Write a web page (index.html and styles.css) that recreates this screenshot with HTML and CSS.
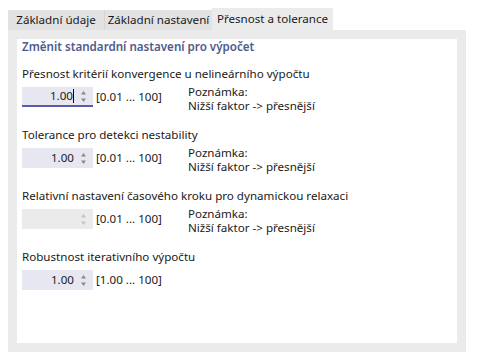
FILE: index.html
```html
<!DOCTYPE html>
<html lang="cs">
<head>
  <meta charset="UTF-8">
  <title>Přesnost a tolerance</title>
  <link rel="stylesheet" href="styles.css">
</head>
<body>

  <div class="tabs">
    <div class="tab tab-1">Základní údaje</div>
    <div class="tab tab-2">Základní nastavení</div>
    <div class="tab tab-3 active">Přesnost a tolerance</div>
  </div>

  <div class="panel">
    <div class="panel-inner">
      <div class="section-title">Změnit standardní nastavení pro výpočet</div>

      <div class="setting">
        <div class="setting-label">Přesnost kritérií konvergence u nelineárního výpočtu</div>
        <div class="setting-row">
          <div class="spin focused">
            <span class="spin-value">1.00<span class="caret"></span></span>
            <svg class="spin-arrows" width="7" height="13" viewBox="0 0 7 13"><path d="M3.5 1 L6 4.5 L1 4.5 Z" fill="#8a8a8a"/><path d="M3.5 12 L6 8.5 L1 8.5 Z" fill="#8a8a8a"/></svg>
          </div>
          <span class="range">[0.01 ... 100]</span>
          <div class="note">
            <div>Poznámka:</div>
            <div>Nižší faktor -&gt; přesnější</div>
          </div>
        </div>
      </div>

      <div class="setting">
        <div class="setting-label">Tolerance pro detekci nestability</div>
        <div class="setting-row">
          <div class="spin">
            <span class="spin-value">1.00</span>
            <svg class="spin-arrows" width="7" height="13" viewBox="0 0 7 13"><path d="M3.5 1 L6 4.5 L1 4.5 Z" fill="#8a8a8a"/><path d="M3.5 12 L6 8.5 L1 8.5 Z" fill="#8a8a8a"/></svg>
          </div>
          <span class="range">[0.01 ... 100]</span>
          <div class="note">
            <div>Poznámka:</div>
            <div>Nižší faktor -&gt; přesnější</div>
          </div>
        </div>
      </div>

      <div class="setting">
        <div class="setting-label">Relativní nastavení časového kroku pro dynamickou relaxaci</div>
        <div class="setting-row">
          <div class="spin disabled">
            <span class="spin-value"></span>
            <svg class="spin-arrows" width="7" height="13" viewBox="0 0 7 13"><path d="M3.5 1 L6 4.5 L1 4.5 Z" fill="#c4c4c4"/><path d="M3.5 12 L6 8.5 L1 8.5 Z" fill="#c4c4c4"/></svg>
          </div>
          <span class="range">[0.01 ... 100]</span>
          <div class="note">
            <div>Poznámka:</div>
            <div>Nižší faktor -&gt; přesnější</div>
          </div>
        </div>
      </div>

      <div class="setting">
        <div class="setting-label">Robustnost iterativního výpočtu</div>
        <div class="setting-row">
          <div class="spin">
            <span class="spin-value">1.00</span>
            <svg class="spin-arrows" width="7" height="13" viewBox="0 0 7 13"><path d="M3.5 1 L6 4.5 L1 4.5 Z" fill="#8a8a8a"/><path d="M3.5 12 L6 8.5 L1 8.5 Z" fill="#8a8a8a"/></svg>
          </div>
          <span class="range">[1.00 ... 100]</span>
        </div>
      </div>
    </div>
  </div>

</body>
</html>
```

FILE: styles.css
```css
body {
  font-family: "Noto Sans", "Open Sans", sans-serif;
  font-size: 11.6px;
  color: #1a1a1a;
  background: #ffffff;
  margin: 0;
  padding: 8px;
}

.tabs {
  display: flex;
  align-items: flex-end;
  height: 22px;
}

.tab {
  height: 20px;
  line-height: 20px;
  background: #e2e2e2;
  text-align: center;
  white-space: nowrap;
}

.tab-1 {
  width: 96px;
  border-right: 1px solid #d4d4d4;
}

.tab-2 {
  width: 107px;
}

.tab-3 {
  width: 121px;
}

.tab.active {
  height: 22px;
  line-height: 22px;
  background: #ebebeb;
}

.panel {
  width: 440px;
  height: 304px;
  background: #ebebeb;
  padding: 9px;
}

.panel-inner {
  background: #ffffff;
  height: 100%;
  padding: 0 5px;
  box-sizing: border-box;
}

.section-title {
  line-height: 16px;
  color: #4f5b8c;
  font-weight: 600;
}

.setting {
  margin-top: 11px;
}

.setting + .setting {
  margin-top: 15px;
}

.setting-label {
  line-height: 16px;
}

.setting-row {
  display: flex;
  align-items: flex-start;
  margin-top: 4px;
  height: 26px;
}

.spin {
  width: 71px;
  height: 20px;
  margin-top: 1px;
  background: #e7e7f1;
  display: flex;
  align-items: center;
  box-sizing: border-box;
}

.spin.focused {
  border-bottom: 2px solid #5a5ea6;
}

.spin.disabled {
  background: #ebebeb;
}

.spin-value {
  flex: 1;
  text-align: right;
  line-height: 20px;
  padding-right: 6px;
}

.caret {
  display: inline-block;
  width: 1px;
  height: 14px;
  background: #000000;
  vertical-align: -3px;
}

.spin-arrows {
  margin-right: 6px;
}

.range {
  width: 92px;
  margin-left: 3px;
  line-height: 22px;
}

.note {
  line-height: 14px;
  margin-top: -1px;
}
```
